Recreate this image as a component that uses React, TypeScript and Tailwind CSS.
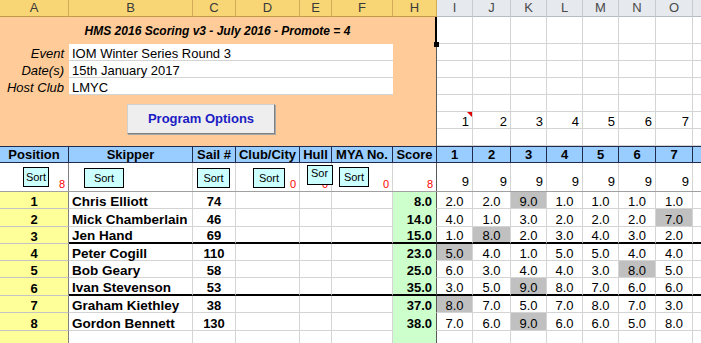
const colLetters = [
  { l: "A", w: "w-[69px]", sel: true },
  { l: "B", w: "w-[124px]", sel: true },
  { l: "C", w: "w-[43px]", sel: true },
  { l: "D", w: "w-[64px]", sel: true },
  { l: "E", w: "w-[32px]", sel: true },
  { l: "F", w: "w-[61px]", sel: true },
  { l: "H", w: "w-[44px]", sel: true },
  { l: "I", w: "w-[36px]", sel: false },
  { l: "J", w: "w-[38px]", sel: false },
  { l: "K", w: "w-[36px]", sel: false },
  { l: "L", w: "w-[36px]", sel: false },
  { l: "M", w: "w-[36px]", sel: false },
  { l: "N", w: "w-[37px]", sel: false },
  { l: "O", w: "w-[37px]", sel: false },
];

const raceCols = ["w-[36px]", "w-[38px]", "w-[36px]", "w-[36px]", "w-[36px]", "w-[37px]", "w-[37px]"];

const topRowH = ["h-[27px]", "h-[17px]", "h-[17px]", "h-[17px]", "h-[17px]", "h-[17px]", "h-[17px]"];
const dataRowH = ["h-[17px]", "h-[18px]", "h-[17px]", "h-[17px]", "h-[17px]", "h-[18px]", "h-[17px]", "h-[18px]"];

const info = [
  ["Event", "IOM Winter Series Round 3"],
  ["Date(s)", "15th January 2017"],
  ["Host Club", "LMYC"],
];

const headers = [
  { t: "Position", w: "w-[69px]" },
  { t: "Skipper", w: "w-[124px]" },
  { t: "Sail #", w: "w-[43px]" },
  { t: "Club/City", w: "w-[64px]" },
  { t: "Hull", w: "w-[32px]" },
  { t: "MYA No.", w: "w-[61px]" },
  { t: "Score", w: "w-[44px]" },
];

const results = [
  { pos: 1, name: "Chris Elliott", sail: 74, score: "8.0", races: ["2.0", "2.0", "9.0", "1.0", "1.0", "1.0", "1.0"], drop: 2 },
  { pos: 2, name: "Mick Chamberlain", sail: 46, score: "14.0", races: ["4.0", "1.0", "3.0", "2.0", "2.0", "2.0", "7.0"], drop: 6 },
  { pos: 3, name: "Jen Hand", sail: 69, score: "15.0", races: ["1.0", "8.0", "2.0", "3.0", "4.0", "3.0", "2.0"], drop: 1 },
  { pos: 4, name: "Peter Cogill", sail: 110, score: "23.0", races: ["5.0", "4.0", "1.0", "5.0", "5.0", "4.0", "4.0"], drop: 0 },
  { pos: 5, name: "Bob Geary", sail: 58, score: "25.0", races: ["6.0", "3.0", "4.0", "4.0", "3.0", "8.0", "5.0"], drop: 5 },
  { pos: 6, name: "Ivan Stevenson", sail: 53, score: "35.0", races: ["3.0", "5.0", "9.0", "8.0", "7.0", "6.0", "6.0"], drop: 2 },
  { pos: 7, name: "Graham Kiethley", sail: 38, score: "37.0", races: ["8.0", "7.0", "5.0", "7.0", "8.0", "7.0", "3.0"], drop: 0 },
  { pos: 8, name: "Gordon Bennett", sail: 130, score: "38.0", races: ["7.0", "6.0", "9.0", "6.0", "6.0", "5.0", "8.0"], drop: 2 },
];

function SortButton({ className, label = "Sort" }: { className: string; label?: string }) {
  return (
    <div
      className={`relative z-10 h-[20px] bg-[#ccffff] border border-black text-[11px] leading-none flex justify-center items-center overflow-hidden ${className}`}
    >
      {label}
    </div>
  );
}

function RedNum({ n }: { n: string }) {
  return <span className="ml-auto self-end pr-[3px] pb-[1px] text-[11px] leading-[12px] text-[#ff0000]">{n}</span>;
}

export default function App() {
  return (
    <div className="w-[701px] h-[343px] overflow-hidden bg-white text-[13px] text-black font-['Liberation_Sans',Arial,sans-serif]">
      {/* column letters */}
      <div className="flex h-[17px]">
        {colLetters.map((c) => (
          <div
            key={c.l}
            className={`${c.w} shrink-0 flex items-center justify-center leading-[16px] border-r border-b ${
              c.sel
                ? "bg-[#f8d676] border-r-[#d2aa58] border-b-[#c29a47] text-[#3a3a3a]"
                : "bg-[#e6e9ee] border-r-[#c7cbd1] border-b-[#b7bcc4] text-[#4a4a4a]"
            }`}
          >
            {c.l}
          </div>
        ))}
        <div className="flex-1 bg-[#e6e9ee] border-b border-b-[#b7bcc4]" />
      </div>

      {/* heading block */}
      <div className="flex">
        <div className="w-[437px] shrink-0 bg-[#ffcc99]">
          <div className="relative z-10 h-[27px] flex items-center justify-center pt-[1px] border-r-2 border-black text-[12px] font-bold italic">
            HMS 2016 Scoring v3 - July 2016 - Promote = 4
            <span className="absolute right-[-4px] bottom-[-3px] w-[5px] h-[5px] bg-black" />
          </div>
          {info.map(([label, value]) => (
            <div key={label} className="flex h-[17px] border-r border-[#5a5a5a]">
              <div className="w-[69px] shrink-0 flex items-end justify-end pr-[5px] pb-[1px] italic leading-[13px]">
                {label}
              </div>
              <div className="w-[324px] shrink-0 flex items-end pl-[3px] bg-white border-b border-[#d4d4d4] leading-[13px]">
                {value}
              </div>
              <div className="flex-1" />
            </div>
          ))}
          <div className="h-[51px] border-r border-[#5a5a5a] pl-[127px] pt-[9px]">
            <div className="w-[148px] h-[30px] flex items-center justify-center bg-[#eeeeee] border border-[#d0d0d0] border-r-[#808080] border-b-[#808080] shadow-[1px_1px_0_#a8a8a8] font-bold text-[#1c1cc4]">
              Program Options
            </div>
          </div>
        </div>
        <div className="flex-1">
          {topRowH.map((h, r) => (
            <div key={r} className={`flex ${h}`}>
              {raceCols.map((w, c) => (
                <div
                  key={c}
                  className={`${w} shrink-0 relative flex items-end justify-end pr-[3px] leading-[13px] border-r border-b border-[#d4d4d4]`}
                >
                  {r === 5 ? c + 1 : ""}
                  {r === 5 && c === 0 && (
                    <span className="absolute top-0 right-0 w-0 h-0 border-t-[5px] border-l-[5px] border-t-[#e00000] border-l-transparent" />
                  )}
                </div>
              ))}
              <div className="flex-1 border-b border-[#d4d4d4]" />
            </div>
          ))}
        </div>
      </div>

      {/* blue header row */}
      <div className="flex h-[17px] bg-[#99ccff] border-y border-[#1f2a4d] font-bold">
        {headers.map((h) => (
          <div key={h.t} className={`${h.w} shrink-0 flex items-center justify-center leading-[15px] border-r border-[#1f2a4d]`}>
            {h.t}
          </div>
        ))}
        {raceCols.map((w, c) => (
          <div key={c} className={`${w} shrink-0 flex items-center justify-center leading-[15px] border-r border-[#1f2a4d]`}>
            {c + 1}
          </div>
        ))}
        <div className="flex-1" />
      </div>

      {/* sort row */}
      <div className="flex h-[29px] border-b border-[#a0a0a0]">
        <div className="w-[69px] shrink-0 flex items-start border-r border-[#808080]">
          <SortButton className="w-[26px] mt-[4px] ml-[23px]" />
          <RedNum n="8" />
        </div>
        <div className="w-[124px] shrink-0 flex items-start border-r border-[#d4d4d4]">
          <SortButton className="w-[40px] mt-[5px] ml-[15px]" />
        </div>
        <div className="w-[43px] shrink-0 flex items-start border-r border-[#d4d4d4]">
          <SortButton className="w-[33px] mt-[5px] ml-[4px]" />
        </div>
        <div className="w-[64px] shrink-0 flex items-start border-r border-[#d4d4d4]">
          <SortButton className="w-[32px] mt-[5px] ml-[17px]" />
          <RedNum n="0" />
        </div>
        <div className="relative w-[32px] shrink-0 flex items-start border-r border-[#d4d4d4]">
          <SortButton className="w-[26px] shrink-0 mt-[2px] ml-[7px] !items-start !justify-start pl-[3px] pt-[2px]" label="Sor" />
          <span className="absolute right-[3px] bottom-[1px] text-[11px] leading-[12px] text-[#ff0000]">0</span>
        </div>
        <div className="w-[61px] shrink-0 flex items-start border-r border-[#d4d4d4]">
          <SortButton className="w-[30px] mt-[4px] ml-[7px]" />
          <RedNum n="0" />
        </div>
        <div className="w-[44px] shrink-0 flex items-start border-r border-[#595959]">
          <RedNum n="8" />
        </div>
        {raceCols.map((w, c) => (
          <div key={c} className={`${w} shrink-0 flex items-end justify-end pr-[3px] pb-[3px] leading-[13px] border-r border-[#d4d4d4]`}>
            9
          </div>
        ))}
        <div className="flex-1" />
      </div>

      {/* results */}
      {results.map((r, i) => {
        const thick = i === 2 || i === 5;
        const bb = thick ? "border-b-2 border-b-black" : "border-b border-b-[#d4d4d4]";
        return (
          <div key={r.pos} className={`flex ${dataRowH[i]}`}>
            <div className="w-[69px] shrink-0 flex items-end justify-center bg-[#ffff99] border-r border-r-[#808080] border-b border-b-[#c4c4c4] font-bold leading-[13px]">
              {r.pos}
            </div>
            <div className={`w-[124px] shrink-0 flex items-end pl-[3px] border-r border-r-[#d4d4d4] ${bb} text-[13.5px] font-bold leading-[13px]`}>
              {r.name}
            </div>
            <div className={`w-[43px] shrink-0 flex items-end justify-center border-r border-r-[#d4d4d4] ${bb} font-bold leading-[13px]`}>
              {r.sail}
            </div>
            <div className={`w-[64px] shrink-0 border-r border-r-[#d4d4d4] ${bb}`} />
            <div className={`w-[32px] shrink-0 border-r border-r-[#d4d4d4] ${bb}`} />
            <div className={`w-[61px] shrink-0 border-r border-r-[#d4d4d4] ${bb}`} />
            <div
              className={`w-[44px] shrink-0 flex items-end justify-end pr-[4px] bg-[#ccffcc] border-r border-r-[#595959] ${
                thick ? "border-b-2 border-b-black" : "border-b border-b-[#ccffcc]"
              } font-bold leading-[13px]`}
            >
              {r.score}
            </div>
            {r.races.map((v, c) => (
              <div
                key={c}
                className={`${raceCols[c]} shrink-0 flex items-end justify-center leading-[13px] border-r border-r-[#d4d4d4] ${bb} ${
                  c === r.drop ? "bg-[#c0c0c0]" : ""
                }`}
              >
                {v}
              </div>
            ))}
            <div className={`flex-1 ${bb}`} />
          </div>
        );
      })}

      {/* empty row */}
      <div className="flex h-[17px]">
        <div className="w-[69px] shrink-0 bg-[#ffff99] border-r border-r-[#808080] border-b border-b-[#c4c4c4]" />
        <div className="w-[124px] shrink-0 border-r border-b border-[#d4d4d4]" />
        <div className="w-[43px] shrink-0 border-r border-b border-[#d4d4d4]" />
        <div className="w-[64px] shrink-0 border-r border-b border-[#d4d4d4]" />
        <div className="w-[32px] shrink-0 border-r border-b border-[#d4d4d4]" />
        <div className="w-[61px] shrink-0 border-r border-b border-[#d4d4d4]" />
        <div className="w-[44px] shrink-0 bg-[#ccffcc] border-r border-r-[#595959]" />
        {raceCols.map((w, c) => (
          <div key={c} className={`${w} shrink-0 border-r border-b border-[#d4d4d4]`} />
        ))}
        <div className="flex-1 border-b border-[#d4d4d4]" />
      </div>
    </div>
  );
}
